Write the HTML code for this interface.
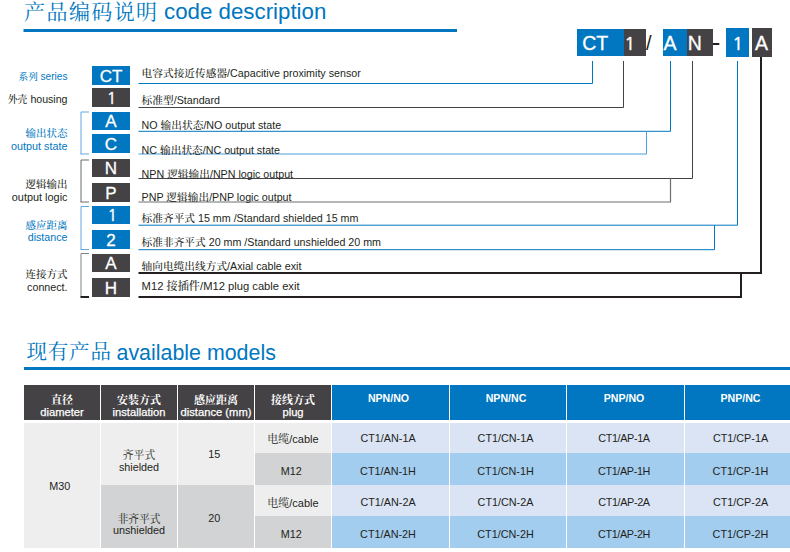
<!DOCTYPE html>
<html lang="zh-CN"><head><meta charset="utf-8"><title>产品编码说明 code description</title>
<style>
html,body{margin:0;padding:0;background:#fff;}
body{width:790px;height:552px;position:relative;overflow:hidden;font-family:"Liberation Sans", "Noto Serif CJK SC", sans-serif;color:#231f20;}
svg{position:absolute;left:0;top:0;}
svg text{font-family:"Liberation Sans", "Noto Serif CJK SC", sans-serif;}


table{position:absolute;left:24px;top:385px;border-collapse:separate;border-spacing:0;table-layout:fixed;width:766px;}
td,th{padding:0;text-align:center;vertical-align:top;font-weight:normal;box-sizing:border-box;overflow:hidden;white-space:nowrap;}
th.hd{background:#444245;color:#fff;height:35px;border-right:1.5px solid #fff;font-size:11.2px;line-height:11.6px;-webkit-text-stroke:0.25px #fff;}
th.hd b{font-weight:bold;font-size:11px;-webkit-text-stroke:0;display:block;line-height:11.6px;}
th.hb{background:#0077c0;color:#fff;font-weight:bold;height:35px;border-right:1px solid #fff;font-size:10.6px;line-height:12px;}
tr.sp td{height:3px;background:#fff;}
td{font-size:10.8px;line-height:12px;}
td.g1{background:#eeeeee;border-right:1.5px solid #fff;}
td.g2{background:#d1d3d4;border-right:1.5px solid #fff;}
td.b1{background:#dbe4f4;border-right:1px solid #fff;}
td.b2{background:#a3cdee;border-right:1px solid #fff;}
td i{font-style:normal;font-weight:400;}
tr>:last-child{border-right:0 !important;}
span.s{position:relative;}
</style></head><body>
<svg width="790" height="552" viewBox="0 0 790 552">
<rect x="23.5" y="29" width="433.5" height="3" fill="#0077c0"/>
<rect x="24" y="367" width="766" height="3" fill="#0077c0"/>
<text x="24.1" y="18.6" fill="#0077c0" font-size="21" font-weight="400" letter-spacing="1.4">产品编码说明</text>
<text x="164" y="19" fill="#0077c0" font-size="22.3">code description</text>
<text x="26.5" y="359.3" fill="#0077c0" font-size="20.5" font-weight="400" letter-spacing="0.8">现有产品</text>
<text x="116.5" y="359.6" fill="#0077c0" font-size="21.4">available models</text>
<rect x="577" y="29" width="47" height="27" fill="#0077c0"/>
<text x="595.2" y="49.7" fill="#fff" stroke="#fff" stroke-width="0.3" font-size="19.5" text-anchor="middle">CT</text>
<rect x="624" y="29" width="22" height="27" fill="#444245"/>
<text x="629.8" y="49.7" fill="#fff" stroke="#fff" style="font-family:NanumGothic,sans-serif" stroke-width="0.5" font-size="18.3" text-anchor="middle">1</text>
<rect x="663" y="29" width="24" height="27" fill="#0077c0"/>
<text x="670" y="49.7" fill="#fff" stroke="#fff" stroke-width="0.3" font-size="19.5" text-anchor="middle">A</text>
<rect x="687" y="29" width="26" height="27" fill="#444245"/>
<text x="694.7" y="49.7" fill="#fff" stroke="#fff" stroke-width="0.3" font-size="19.5" text-anchor="middle">N</text>
<rect x="726" y="28" width="23" height="29" fill="#0077c0"/>
<text x="737.7" y="49.7" fill="#fff" stroke="#fff" style="font-family:NanumGothic,sans-serif" stroke-width="0.5" font-size="18.3" text-anchor="middle">1</text>
<rect x="752" y="28" width="20" height="29" fill="#444245"/>
<text x="761.6" y="49.7" fill="#fff" stroke="#fff" stroke-width="0.3" font-size="19.5" text-anchor="middle">A</text>
<text x="648.8" y="49.5" fill="#231f20" font-size="20" text-anchor="middle">/</text>
<rect x="713" y="43" width="6.3" height="2" fill="#231f20"/>
<rect x="92" y="66" width="38" height="19" fill="#0077c0"/>
<text x="111" y="81.8" fill="#fff" stroke="#fff" stroke-width="0.3" font-size="17" text-anchor="middle">CT</text>
<path d="M138.5 83.5H592.5V61" fill="none" stroke="#0077c0" stroke-width="1"/>
<text x="141.6" y="77.3" fill="#231f20" font-size="10.7"><tspan font-weight="500">电容式接近传感器</tspan>/Capacitive proximity sensor</text>
<rect x="92" y="88" width="38" height="19" fill="#444245"/>
<text x="111.6" y="103.8" fill="#fff" stroke="#fff" style="font-family:NanumGothic,sans-serif" stroke-width="0.45" font-size="16" text-anchor="middle">1</text>
<path d="M138.5 107.5H623.5V61" fill="none" stroke="#444245" stroke-width="1"/>
<text x="141.6" y="103.7" fill="#231f20" font-size="10.7"><tspan font-weight="500">标准型</tspan>/Standard</text>
<rect x="92" y="112" width="38" height="18" fill="#0077c0"/>
<text x="111" y="127.3" fill="#fff" stroke="#fff" stroke-width="0.3" font-size="17" text-anchor="middle">A</text>
<path d="M138.5 131.3H670.5V61" fill="none" stroke="#0077c0" stroke-width="1"/>
<text x="141.6" y="128.5" fill="#231f20" font-size="10.7">NO <tspan font-weight="500">输出状态</tspan>/NO output state</text>
<rect x="92" y="134" width="38" height="19" fill="#0077c0"/>
<text x="111" y="149.8" fill="#fff" stroke="#fff" stroke-width="0.3" font-size="17" text-anchor="middle">C</text>
<path d="M138.5 154H646.5V131.3" fill="none" stroke="#4d9fdb" stroke-width="1"/>
<text x="141.6" y="154.2" fill="#231f20" font-size="10.7">NC <tspan font-weight="500">输出状态</tspan>/NC output state</text>
<rect x="92" y="159" width="38" height="18" fill="#444245"/>
<text x="111" y="174.3" fill="#fff" stroke="#fff" stroke-width="0.3" font-size="17" text-anchor="middle">N</text>
<path d="M138.5 178.5H692.5V61" fill="none" stroke="#444245" stroke-width="1"/>
<text x="141.6" y="177.6" fill="#231f20" font-size="10.7">NPN <tspan font-weight="500">逻辑输出</tspan>/NPN logic output</text>
<rect x="92" y="183" width="38" height="19" fill="#444245"/>
<text x="111" y="198.8" fill="#fff" stroke="#fff" stroke-width="0.3" font-size="17" text-anchor="middle">P</text>
<path d="M138.5 202H670.5V178.5" fill="none" stroke="#6d6e70" stroke-width="1.2"/>
<text x="141.6" y="200.7" fill="#231f20" font-size="10.7">PNP <tspan font-weight="500">逻辑输出</tspan>/PNP logic output</text>
<rect x="92" y="206" width="38" height="18" fill="#0077c0"/>
<text x="112.3" y="221.3" fill="#fff" stroke="#fff" style="font-family:NanumGothic,sans-serif" stroke-width="0.45" font-size="16" text-anchor="middle">1</text>
<path d="M138.5 225.2H737.5V61" fill="none" stroke="#0077c0" stroke-width="1"/>
<text x="141.6" y="221.5" fill="#231f20" font-size="10.7"><tspan font-weight="500">标准齐平式</tspan> 15 mm /Standard shielded 15 mm</text>
<rect x="92" y="230" width="38" height="19" fill="#0077c0"/>
<text x="111" y="245.8" fill="#fff" stroke="#fff" stroke-width="0.3" font-size="17" text-anchor="middle">2</text>
<path d="M138.5 249.7H714.5V225.2" fill="none" stroke="#0077c0" stroke-width="1"/>
<text x="141.6" y="246" fill="#231f20" font-size="10.7"><tspan font-weight="500">标准非齐平式</tspan> 20 mm /Standard unshielded 20 mm</text>
<rect x="92" y="254" width="38" height="18" fill="#444245"/>
<text x="111" y="269.3" fill="#fff" stroke="#fff" stroke-width="0.3" font-size="17" text-anchor="middle">A</text>
<path d="M138.5 273H761V57" fill="none" stroke="#231f20" stroke-width="2"/>
<text x="141.6" y="269.6" fill="#231f20" font-size="10.7"><tspan font-weight="500">轴向电缆出线方式</tspan>/Axial cable exit</text>
<rect x="92" y="278" width="38" height="19" fill="#444245"/>
<text x="111" y="293.8" fill="#fff" stroke="#fff" stroke-width="0.3" font-size="17" text-anchor="middle">H</text>
<path d="M138.5 297H741V273" fill="none" stroke="#231f20" stroke-width="2"/>
<text x="141.6" y="290.1" fill="#231f20" font-size="11.2">M12 <tspan font-weight="500">接插件</tspan>/M12 plug cable exit</text>
<path d="M89 112H81V154" fill="none" stroke="#4d9fdb" stroke-width="0.9"/>
<path d="M80.5 154H89" fill="none" stroke="#4d9fdb" stroke-width="0.9"/>
<path d="M89 160H81V202" fill="none" stroke="#58595b" stroke-width="0.9"/>
<path d="M80.5 202H89" fill="none" stroke="#58595b" stroke-width="0.9"/>
<path d="M89 206.5H81V249.5" fill="none" stroke="#4d9fdb" stroke-width="0.9"/>
<path d="M80.5 249.5H89" fill="none" stroke="#4d9fdb" stroke-width="0.9"/>
<path d="M89 253.5H81V297" fill="none" stroke="#808285" stroke-width="1"/>
<path d="M80.5 297H89" fill="none" stroke="#231f20" stroke-width="2"/>
<text x="67.5" y="80" fill="#0077c0" font-size="10.1" text-anchor="end"><tspan font-weight="500" font-size="9.6">系列</tspan> series</text>
<text x="67.5" y="103" fill="#231f20" font-size="10.6" text-anchor="end"><tspan font-weight="500" font-size="9.9">外壳</tspan> housing</text>
<text x="67.5" y="136.7" fill="#0077c0" font-size="10.5" text-anchor="end"><tspan font-weight="500" font-size="10.5">输出状态</tspan></text>
<text x="67.5" y="150" fill="#0077c0" font-size="10.8" text-anchor="end">output state</text>
<text x="67.5" y="187.7" fill="#231f20" font-size="10.5" text-anchor="end"><tspan font-weight="500" font-size="10.5">逻辑输出</tspan></text>
<text x="67.5" y="201" fill="#231f20" font-size="10.9" text-anchor="end">output logic</text>
<text x="67.5" y="228.5" fill="#0077c0" font-size="10.5" text-anchor="end"><tspan font-weight="500" font-size="10.5">感应距离</tspan></text>
<text x="67.5" y="241" fill="#0077c0" font-size="10.7" text-anchor="end">distance</text>
<text x="67.5" y="278" fill="#231f20" font-size="10.5" text-anchor="end"><tspan font-weight="500" font-size="10.5">连接方式</tspan></text>
<text x="67.5" y="291" fill="#231f20" font-size="10.7" text-anchor="end">connect.</text>
</svg>
<table>
<colgroup><col style="width:77px"><col style="width:77px"><col style="width:77px"><col style="width:77px"><col style="width:118px"><col style="width:117px"><col style="width:118px"><col style="width:105px"></colgroup>
<tr>
<th class="hd" style="padding-top:9.99px"><b>直径</b>diameter</th>
<th class="hd" style="padding-top:9.99px"><b>安装方式</b>installation</th>
<th class="hd" style="padding-top:9.99px"><b>感应距离</b>distance (mm)</th>
<th class="hd" style="padding-top:9.99px"><b>接线方式</b>plug</th>
<th class="hb" style="padding-top:7.43px"><span class="s" style="left:-2px">NPN/NO</span></th>
<th class="hb" style="padding-top:7.43px"><span class="s" style="left:-2px">NPN/NC</span></th>
<th class="hb" style="padding-top:7.43px"><span class="s" style="left:-1.5px">PNP/NO</span></th>
<th class="hb" style="padding-top:7.43px"><span class="s" style="left:3px">PNP/NC</span></th>
</tr>
<tr class="sp"><td colspan="8"></td></tr>
<tr style="height:30px">
<td rowspan="4" class="g1" style="padding-top:56.86px"><span class="s" style="left:-2.3px">M30</span></td>
<td rowspan="2" class="g1" style="line-height:11.8px;padding-top:27.06px"><i>齐平式</i><br>shielded</td>
<td rowspan="2" class="g1" style="padding-top:24.76px"><span class="s" style="left:-1.8px">15</span></td>
<td class="g1" style="font-size:11px;padding-top:9.89px"><i>电缆</i>/cable</td>
<td class="b1" style="padding-top:9.26px"><span class="s" style="left:-2.5px">CT1/AN-1A</span></td>
<td class="b1" style="padding-top:9.26px"><span class="s" style="left:-2.5px">CT1/CN-1A</span></td>
<td class="b1" style="padding-top:9.26px"><span class="s" style="left:-1.5px;letter-spacing:-0.35px">CT1/AP-1A</span></td>
<td class="b1" style="padding-top:9.26px"><span class="s" style="left:3px">CT1/CP-1A</span></td>
</tr>
<tr style="height:32px">
<td class="g2" style="padding-top:12.26px"><span class="s" style="left:-1.8px">M12</span></td>
<td class="b2" style="padding-top:12.26px"><span class="s" style="left:-2.5px">CT1/AN-1H</span></td>
<td class="b2" style="padding-top:12.26px"><span class="s" style="left:-2.5px">CT1/CN-1H</span></td>
<td class="b2" style="padding-top:12.26px"><span class="s" style="left:-1.5px;letter-spacing:-0.35px">CT1/AP-1H</span></td>
<td class="b2" style="padding-top:12.26px"><span class="s" style="left:3px">CT1/CP-1H</span></td>
</tr>
<tr style="height:31px">
<td rowspan="2" class="g2" style="line-height:11.8px;padding-top:28.66px"><i>非齐平式</i><br>unshielded</td>
<td rowspan="2" class="g2" style="padding-top:26.56px"><span class="s" style="left:-1.8px">20</span></td>
<td class="g1" style="font-size:11px;padding-top:12.09px"><i>电缆</i>/cable</td>
<td class="b1" style="padding-top:11.46px"><span class="s" style="left:-2.5px">CT1/AN-2A</span></td>
<td class="b1" style="padding-top:11.46px"><span class="s" style="left:-2.5px">CT1/CN-2A</span></td>
<td class="b1" style="padding-top:11.46px"><span class="s" style="left:-1.5px;letter-spacing:-0.35px">CT1/AP-2A</span></td>
<td class="b1" style="padding-top:11.46px"><span class="s" style="left:3px">CT1/CP-2A</span></td>
</tr>
<tr style="height:32px">
<td class="g2" style="padding-top:12.26px"><span class="s" style="left:-1.8px">M12</span></td>
<td class="b2" style="padding-top:12.26px"><span class="s" style="left:-2.5px">CT1/AN-2H</span></td>
<td class="b2" style="padding-top:12.26px"><span class="s" style="left:-2.5px">CT1/CN-2H</span></td>
<td class="b2" style="padding-top:12.26px"><span class="s" style="left:-1.5px;letter-spacing:-0.35px">CT1/AP-2H</span></td>
<td class="b2" style="padding-top:12.26px"><span class="s" style="left:3px">CT1/CP-2H</span></td>
</tr>
</table>
</body></html>
